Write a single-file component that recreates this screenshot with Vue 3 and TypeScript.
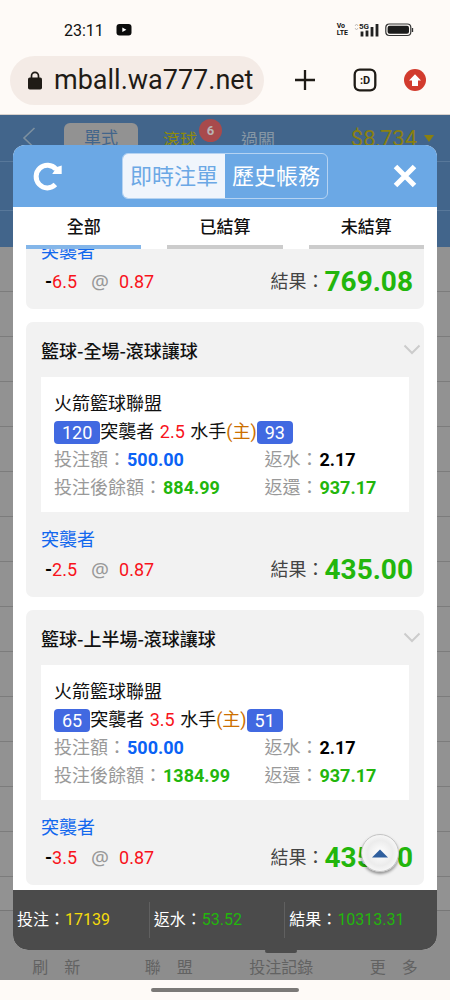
<script setup lang="ts">
import { onMounted, ref } from 'vue'

interface Bet {
  id: number
  title?: string
  league?: string
  awayScore?: number
  line?: string
  homeScore?: number
  stake?: string
  balance?: string
  rebate?: string
  returned?: string
  handicap: string
  odds: string
  result: string
}

const bets: Bet[] = [
  { id: 1, handicap: '6.5', odds: '0.87', result: '769.08' },
  {
    id: 2,
    title: '籃球-全場-滾球讓球',
    league: '火箭籃球聯盟',
    awayScore: 120,
    line: '2.5',
    homeScore: 93,
    stake: '500.00',
    balance: '884.99',
    rebate: '2.17',
    returned: '937.17',
    handicap: '2.5',
    odds: '0.87',
    result: '435.00',
  },
  {
    id: 3,
    title: '籃球-上半場-滾球讓球',
    league: '火箭籃球聯盟',
    awayScore: 65,
    line: '3.5',
    homeScore: 51,
    stake: '500.00',
    balance: '1384.99',
    rebate: '2.17',
    returned: '937.17',
    handicap: '3.5',
    odds: '0.87',
    result: '435.00',
  },
]

const filters = ['全部', '已結算', '未結算']
const activeFilter = ref(0)
const navItems = ['刷　新', '聯　盟', '投注記錄', '更　多']
const address = ref('mball.wa777.net')
const list = ref<HTMLElement | null>(null)

onMounted(() => {
  if (list.value) list.value.scrollTop = list.value.scrollHeight
})

function toTop() {
  list.value?.scrollTo({ top: 0 })
}
</script>

<template>
  <div class="phone">
    <div class="status">
      <span class="clock">23:11</span>
      <svg class="yt" width="16" height="12" viewBox="0 0 16 12" aria-hidden="true">
        <rect x="0.5" width="15" height="11.5" rx="3" fill="#0c0c0c" />
        <path d="M6.3 3.6 10.4 5.8 6.3 8z" fill="#fff" />
      </svg>
      <span class="volte"><span>Vo</span><span>LTE</span></span>
      <svg class="signal" width="26" height="16" viewBox="0 0 26 16" aria-hidden="true">
        <path d="M1 4l1.500-2L4 4M1 6l1.500 2L4 6" fill="none" stroke="#b5b0ad" stroke-width="0.800" />
        <text x="5" y="7" font-family="Roboto" font-weight="700" font-size="8" fill="#222">5G</text>
        <path d="M8 9.500V14.500M13 8.500V14.500M18 5V14.500M23 2V14.500" stroke="#222" stroke-width="2.800" />
      </svg>
      <svg class="battery" width="29" height="14" viewBox="0 0 29 14" aria-hidden="true">
        <rect x="0.8" y="1" width="25" height="11.500" rx="3.500" fill="none" stroke="#333" stroke-width="1.200" />
        <rect x="2.600" y="2.800" width="21.400" height="8" rx="2" fill="#1c1c1c" />
        <path d="M27.500 5v4" stroke="#333" stroke-width="1.300" />
      </svg>
    </div>

    <div class="browser">
      <label class="address">
        <svg width="14" height="19" viewBox="0 0 14 19" aria-hidden="true">
          <path d="M3.500 8V4.900a3.500 3.500 0 0 1 7 0V8" fill="none" stroke="#1f1b16" stroke-width="1.700" />
          <rect y="6.500" width="14" height="12" rx="1.800" fill="#1f1b16" />
        </svg>
        <input v-model="address" type="text" aria-label="網址" />
      </label>
      <div class="tools">
        <button type="button" aria-label="新分頁">
          <svg width="22" height="22" viewBox="0 0 22 22">
            <path d="M11 1v20M1 11h20" stroke="#1f1b16" stroke-width="2.300" />
          </svg>
        </button>
        <button type="button" aria-label="分頁">
          <svg width="24" height="24" viewBox="0 0 24 24">
            <rect x="1.700" y="1.700" width="20.600" height="20.600" rx="5" fill="none" stroke="#1f1b16" stroke-width="2.300" />
            <text x="12" y="16" text-anchor="middle" font-family="Roboto" font-weight="700" font-size="11" fill="#1f1b16">:D</text>
          </svg>
        </button>
        <button type="button" aria-label="更新">
          <svg width="22" height="22" viewBox="0 0 22 22">
            <circle cx="11" cy="11" r="11" fill="#d23b2e" />
            <path d="M11 5.300 17 11.500h-3V17H8v-5.500H5z" fill="#fff" />
          </svg>
        </button>
      </div>
    </div>

    <div class="app">
      <div class="page">
        <header class="topbar">
          <div class="menu">
            <svg class="back" width="14" height="24" viewBox="0 0 14 24" aria-hidden="true">
              <path d="M12.500 2 2 12 12.500 22" fill="none" stroke="#7d909f" stroke-width="1.600" />
            </svg>
            <span class="pill">單式</span>
            <span class="live">滾球<span class="count">6</span></span>
            <span class="parlay">過關</span>
            <span class="money">$8,734</span>
            <span class="caret"></span>
          </div>
          <div class="strip"></div>
          <div class="strip last"></div>
        </header>
        <div class="rows">
          <div v-for="n in 15" :key="n" class="row"></div>
        </div>
        <nav class="bottom">
          <a v-for="item in navItems" :key="item" href="#" :class="{ current: item === '投注記錄' }">{{ item }}</a>
        </nav>
      </div>

      <section class="modal" role="dialog" aria-label="即時注單">
        <header class="head">
          <button class="icon" type="button" aria-label="重新整理">
            <svg width="30" height="30" viewBox="0 0 30 30">
              <path d="M23 8.200A11.300 11.300 0 1 0 22.400 23.600" fill="none" stroke="#fff" stroke-width="5" />
              <path d="M28.700 4.500V13H19.200l2.200-3.200 1-3.300z" fill="#fff" />
            </svg>
          </button>
          <div class="switch">
            <button class="on" type="button">即時注單</button>
            <button type="button">歷史帳務</button>
          </div>
          <button class="icon" type="button" aria-label="關閉">
            <svg width="24" height="24" viewBox="0 0 24 24">
              <path d="M2.500 2.500l19 19M21.500 2.500l-19 19" stroke="#fff" stroke-width="5" />
            </svg>
          </button>
        </header>

        <div class="filters">
          <button
            v-for="(name, i) in filters"
            :key="name"
            type="button"
            :class="{ active: activeFilter === i }"
            @click="activeFilter = i"
          >{{ name }}</button>
        </div>

        <div ref="list" class="list">
          <article v-for="bet in bets" :key="bet.id" class="card">
            <header v-if="bet.title" class="title">
              <h2>{{ bet.title }}</h2>
              <svg width="18" height="11" viewBox="0 0 18 11" aria-hidden="true">
                <path d="M1.500 1.500 9 9l7.500-7.500" fill="none" stroke="#ccc" stroke-width="2" />
              </svg>
            </header>
            <div v-if="bet.league" class="detail">
              <div>{{ bet.league }}</div>
              <div class="match">
                <b class="score">{{ bet.awayScore }}</b>突襲者 <span class="red">{{ bet.line }}</span> 水手<span class="home">(主)</span><b class="score">{{ bet.homeScore }}</b>
              </div>
              <div class="pair">
                <span>投注額：<b class="blue">{{ bet.stake }}</b></span>
                <span>返水：<b class="black">{{ bet.rebate }}</b></span>
              </div>
              <div class="pair">
                <span>投注後餘額：<b class="green">{{ bet.balance }}</b></span>
                <span>返還：<b class="green">{{ bet.returned }}</b></span>
              </div>
            </div>
            <div class="foot">
              <div class="pick">突襲者</div>
              <div class="line">
                <span class="handicap"><b>-</b>{{ bet.handicap }}</span>
                <span class="at">@</span>
                <span class="red">{{ bet.odds }}</span>
                <span class="outcome">結果：<strong>{{ bet.result }}</strong></span>
              </div>
            </div>
          </article>
        </div>

        <footer class="totals">
          <div>投注：<span class="yellow">17139</span></div>
          <div>返水：<span class="green">53.52</span></div>
          <div>結果：<span class="green">10313.31</span></div>
        </footer>

        <button class="up" type="button" aria-label="回到頂端" @click="toTop">
          <svg width="16" height="9" viewBox="0 0 16 9"><path d="M8 0.500 16 8.500H0z" fill="#2f5f9e" /></svg>
        </button>
      </section>
    </div>

    <div class="gesture"><span></span></div>
  </div>
</template>

<style>
body {
  margin: 0;
}
</style>

<style scoped>
.phone {
  display: flex;
  flex-direction: column;
  height: 100vh;
  background: #fefaf7;
  font-family: Roboto, "Noto Sans CJK TC", sans-serif;
  color: #111;
}
button {
  border: 0;
  padding: 0;
  background: none;
  font: inherit;
  color: inherit;
}
svg {
  display: block;
  flex: none;
}
.status {
  display: flex;
  align-items: center;
  height: 32px;
  padding: 14px 36px 0 64px;
}
.clock {
  font-size: 16px;
}
.yt {
  margin-left: 12px;
}
.volte {
  display: grid;
  margin-left: auto;
  font-size: 7px;
  font-weight: 700;
  line-height: 7px;
}
.signal {
  margin-left: 6px;
}
.battery {
  margin-left: 5px;
}
.browser {
  display: flex;
  align-items: center;
  justify-content: space-between;
  height: 68px;
  padding: 0 24px 0 10px;
  border-bottom: 1px solid #d9d2cd;
}
.address {
  display: flex;
  align-items: center;
  gap: 12px;
  box-sizing: border-box;
  width: 61%;
  height: 49px;
  padding: 0 8px 0 18px;
  border-radius: 25px;
  background: #f4ebe6;
}
.address input {
  flex: 1;
  min-width: 0;
  padding: 0;
  border: 0;
  outline: 0;
  background: none;
  font: 27px Roboto, sans-serif;
  color: #1f1b16;
}
.tools {
  display: flex;
  align-items: center;
  gap: 27px;
}
.tools button:first-child {
  margin-right: 10px;
}
.app {
  position: relative;
  flex: 1;
  min-height: 0;
}
.page {
  display: flex;
  flex-direction: column;
  height: 100%;
  background: #929292;
}
.topbar {
  background: #42658b;
}
.menu {
  display: flex;
  align-items: center;
  height: 46px;
  padding: 0 16px 0 22px;
  font-size: 17px;
}
.pill {
  margin-left: 28px;
  padding: 0 20px;
  border-radius: 6px;
  background: #929292;
  color: #42658b;
  line-height: 30px;
}
.live {
  position: relative;
  margin-left: 25px;
  color: #8f8a0c;
}
.count {
  position: absolute;
  top: -7px;
  left: 36px;
  width: 23px;
  border-radius: 50%;
  background: #a84a4c;
  color: #b9b3b3;
  font-size: 13px;
  font-weight: 700;
  line-height: 23px;
  text-align: center;
}
.parlay {
  margin-left: 44px;
  color: #8797a5;
}
.money {
  margin-left: auto;
  font-size: 22px;
  color: #8a8010;
}
.caret {
  margin-left: 7px;
  border: 5px solid transparent;
  border-top: 7px solid #8a8010;
  border-bottom: 0;
}
.strip {
  height: 48px;
  border-top: 1px solid #58789a;
}
.last {
  height: 36px;
}
.rows {
  flex: 1;
  min-height: 0;
  overflow: hidden;
}
.row {
  height: 44px;
  border-bottom: 1px solid #7c7c7c;
}
.bottom {
  display: grid;
  grid-template-columns: repeat(4, 1fr);
  height: 69px;
  border-top: 1px solid #777;
  background: #8d8d8d;
}
.bottom a {
  display: flex;
  flex-direction: column;
  align-items: center;
  justify-content: flex-end;
  gap: 3px;
  font-size: 16px;
  line-height: 24px;
  color: #626262;
  text-decoration: none;
}
.current::before {
  content: "";
  width: 32px;
  height: 4px;
  border-radius: 2px;
  background: #4c4c4c;
}
.modal {
  position: absolute;
  inset: 30px 13px;
  display: flex;
  flex-direction: column;
  overflow: hidden;
  border-radius: 12px 12px 15px 15px;
  background: #fff;
}
.head {
  display: flex;
  align-items: center;
  justify-content: space-between;
  height: 62px;
  padding: 0 20px;
  background: #6ba8e5;
}
.switch {
  display: flex;
  margin-right: 6px;
  border: 1px solid #b5d3f2;
  border-radius: 6px;
  overflow: hidden;
  font-size: 22px;
  line-height: 44px;
  color: #fff;
}
.switch button {
  padding: 2px 7px 0;
  line-height: 42px;
}
.switch .on {
  background: #f0f5fc;
  color: #6ba8e5;
}
.filters {
  display: grid;
  grid-template-columns: repeat(3, 1fr);
  gap: 26px;
  padding: 0 13px;
  font-size: 17px;
  font-weight: 500;
  line-height: 36px;
}
.filters button {
  padding-top: 2px;
  border-bottom: 4px solid #ccc;
}
.filters .active {
  border-color: #84b6e9;
}
.list {
  flex: 1;
  min-height: 0;
  padding: 0 13px 5px;
  overflow-y: auto;
  scrollbar-width: none;
}
.card {
  border-radius: 7px;
  background: #f2f2f2;
  font-size: 18px;
}
.card + .card {
  margin-top: 13px;
}
.title {
  display: flex;
  align-items: center;
  justify-content: space-between;
  height: 55px;
  padding: 0 3px 0 15px;
}
.title h2 {
  margin: 0;
  font-family: "Noto Sans CJK TC", sans-serif;
  font-size: 18px;
  font-weight: 500;
  line-height: 28px;
}
.detail {
  margin: 0 15px;
  padding: 13px 13px 10px;
  background: #fff;
  line-height: 28px;
}
.match {
  display: flex;
  align-items: center;
  white-space: pre;
}
.match .red {
  margin: 0 1px;
}
.score {
  padding: 0 8px;
  border-radius: 4px;
  background: #4169e1;
  color: #fff;
  font-weight: 400;
  line-height: 23px;
}
.pair {
  display: grid;
  grid-template-columns: 8fr 5fr;
  color: #999;
}
.pair b {
  margin-left: 1px;
  font-weight: 700;
}
.home {
  color: #cc7000;
}
.red {
  color: #f8131b;
}
.blue {
  color: #0a62f5;
}
.black {
  color: #000;
}
.green {
  color: #22b60c;
}
.yellow {
  color: #f5dc0c;
}
.foot {
  padding: 13px 11px 12px 15px;
  line-height: 30px;
}
.pick {
  color: #1268ee;
}
.line {
  display: flex;
  align-items: center;
  height: 30px;
}
.handicap {
  margin-left: 4px;
  color: #f8131b;
}
.handicap b {
  color: #000;
}
.at {
  margin: 0 10px 0 14px;
  font-family: "Noto Sans", sans-serif;
  font-size: 20px;
  color: #999;
}
.outcome {
  display: flex;
  align-items: center;
  margin-left: auto;
  color: #444;
}
.outcome strong {
  font-size: 28px;
  font-weight: 700;
  color: #22b60c;
}
.totals {
  display: grid;
  grid-template-columns: 8fr 8fr 9fr;
  align-items: center;
  height: 60px;
  background: #4b4b4b;
  color: #fff;
  font-size: 16px;
  line-height: 36px;
}
.totals div {
  padding-left: 4px;
}
.totals div + div {
  border-left: 1px solid #606060;
}
.up {
  position: absolute;
  right: 38px;
  bottom: 78px;
  display: grid;
  place-items: center;
  width: 38px;
  height: 38px;
  border: 1px solid #c4c4c4;
  border-radius: 50%;
  background: radial-gradient(circle, #fff 0, #ececec 50%, #f6f6f6 70%);
  box-shadow: 0 2px 3px #0006;
}
.gesture {
  display: grid;
  place-items: center;
  height: 20px;
}
.gesture span {
  width: 33%;
  height: 4px;
  border-radius: 2px;
  background: #7b7977;
}
</style>
